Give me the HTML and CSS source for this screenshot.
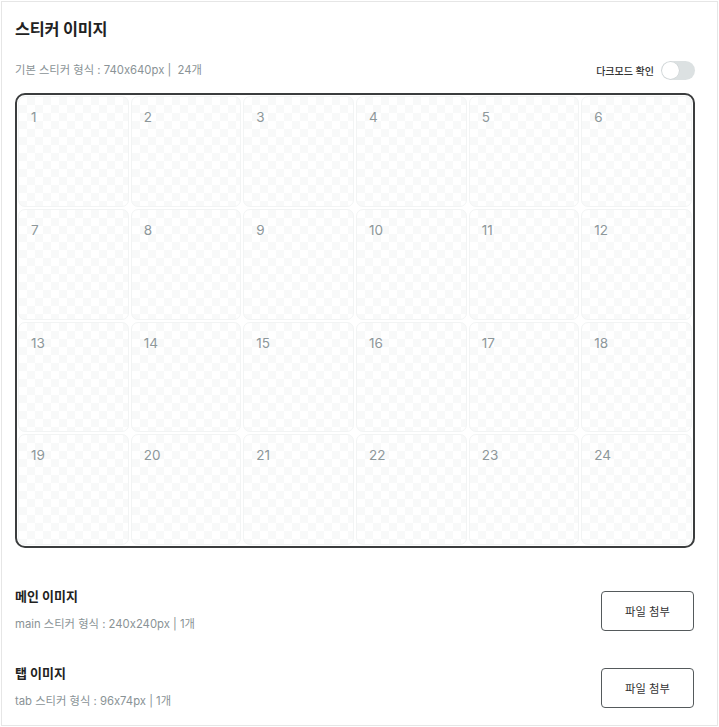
FILE: index.html
```html
<!DOCTYPE html>
<html lang="ko">
<head>
<meta charset="utf-8">
<link rel="stylesheet" href="styles.css">
</head>
<body>
<div class="panel">
  <h1 class="title">스티커 이미지</h1>
  <div class="subrow">
    <span class="desc">기본 스티커 형식 : 740x640px |&nbsp; 24개</span>
    <label class="dark">
      <span class="dark-label">다크모드 확인</span>
      <span class="toggle"><span class="knob"></span></span>
    </label>
  </div>
  <div class="grid">
    <div class="cell">1</div><div class="cell">2</div><div class="cell">3</div><div class="cell">4</div><div class="cell">5</div><div class="cell">6</div>
    <div class="cell">7</div><div class="cell">8</div><div class="cell">9</div><div class="cell">10</div><div class="cell">11</div><div class="cell">12</div>
    <div class="cell">13</div><div class="cell">14</div><div class="cell">15</div><div class="cell">16</div><div class="cell">17</div><div class="cell">18</div>
    <div class="cell">19</div><div class="cell">20</div><div class="cell">21</div><div class="cell">22</div><div class="cell">23</div><div class="cell">24</div>
  </div>
  <div class="upload main-upload">
    <div class="upload-text">
      <h2 class="upload-title">메인 이미지</h2>
      <p class="desc">main 스티커 형식 : 240x240px | 1개</p>
    </div>
    <button class="btn">파일 첨부</button>
  </div>
  <div class="upload tab-upload">
    <div class="upload-text">
      <h2 class="upload-title">탭 이미지</h2>
      <p class="desc">tab 스티커 형식 : 96x74px | 1개</p>
    </div>
    <button class="btn">파일 첨부</button>
  </div>
</div>
</body>
</html>
```
FILE: styles.css
```css
* { box-sizing: border-box; }
html, body { margin: 0; padding: 0; background: #fff; }
body {
  font-family: "Inter", "Noto Sans CJK KR", sans-serif;
  color: #222;
  padding: 1px;
}
.panel {
  width: 717px;
  height: 725px;
  border: 1px solid #e6e6e6;
  padding: 0 23px 0 13px;
}
.title {
  margin: 15px 0 0;
  font-size: 16.3px;
  font-weight: 700;
  line-height: 24px;
  color: #222;
  letter-spacing: -0.2px;
}
.subrow {
  margin-top: 18px;
  height: 22px;
  display: flex;
  align-items: center;
  justify-content: space-between;
}
.desc {
  margin: 0;
  font-size: 11.3px;
  color: #8a9396;
  line-height: 18px;
}
.dark { display: flex; align-items: center; gap: 7px; }
.dark-label { font-size: 10px; color: #333; font-weight: 500; }
.toggle {
  width: 34px; height: 19px;
  border-radius: 10px;
  background: #dce1e2;
  position: relative;
  display: block;
  margin-right: -1px;
}
.knob {
  position: absolute;
  left: 1px; top: 1px;
  width: 17px; height: 17px;
  border-radius: 50%;
  background: #fff;
  box-shadow: 0 0 0 0.5px #c9cfd1;
}
.grid {
  margin-top: 12px;
  width: 680px;
  height: 455px;
  border: 2px solid #3b3d3e;
  border-radius: 10px;
  padding: 1px;
  display: grid;
  grid-template-columns: repeat(6, 1fr);
  grid-template-rows: repeat(4, 1fr);
  gap: 2px;
}
.cell {
  border: 1px solid #f2f4f4;
  border-radius: 7px;
  padding: 11px 0 0 12px;
  font-size: 13.5px;
  color: #8d979a;
  line-height: 18px;
  background-color: #fff;
  background-image: conic-gradient(#f8f9f9 25%, transparent 0 50%, #f8f9f9 0 75%, transparent 0);
  background-size: 16px 16px;
}
.upload {
  display: flex;
  align-items: center;
  justify-content: space-between;
}
.main-upload { margin-top: 38px; }
.tab-upload { margin-top: 30px; }
.upload-title {
  margin: 0;
  font-size: 13px;
  font-weight: 700;
  line-height: 20px;
  color: #222;
}
.upload-text .desc { margin-top: 9px; }
.btn {
  width: 93px; height: 40px;
  border: 1px solid #555a5c;
  border-radius: 4px;
  background: #fff;
  font-family: inherit;
  font-size: 11.3px;
  color: #333;
  margin-top: 2px;
}
```
